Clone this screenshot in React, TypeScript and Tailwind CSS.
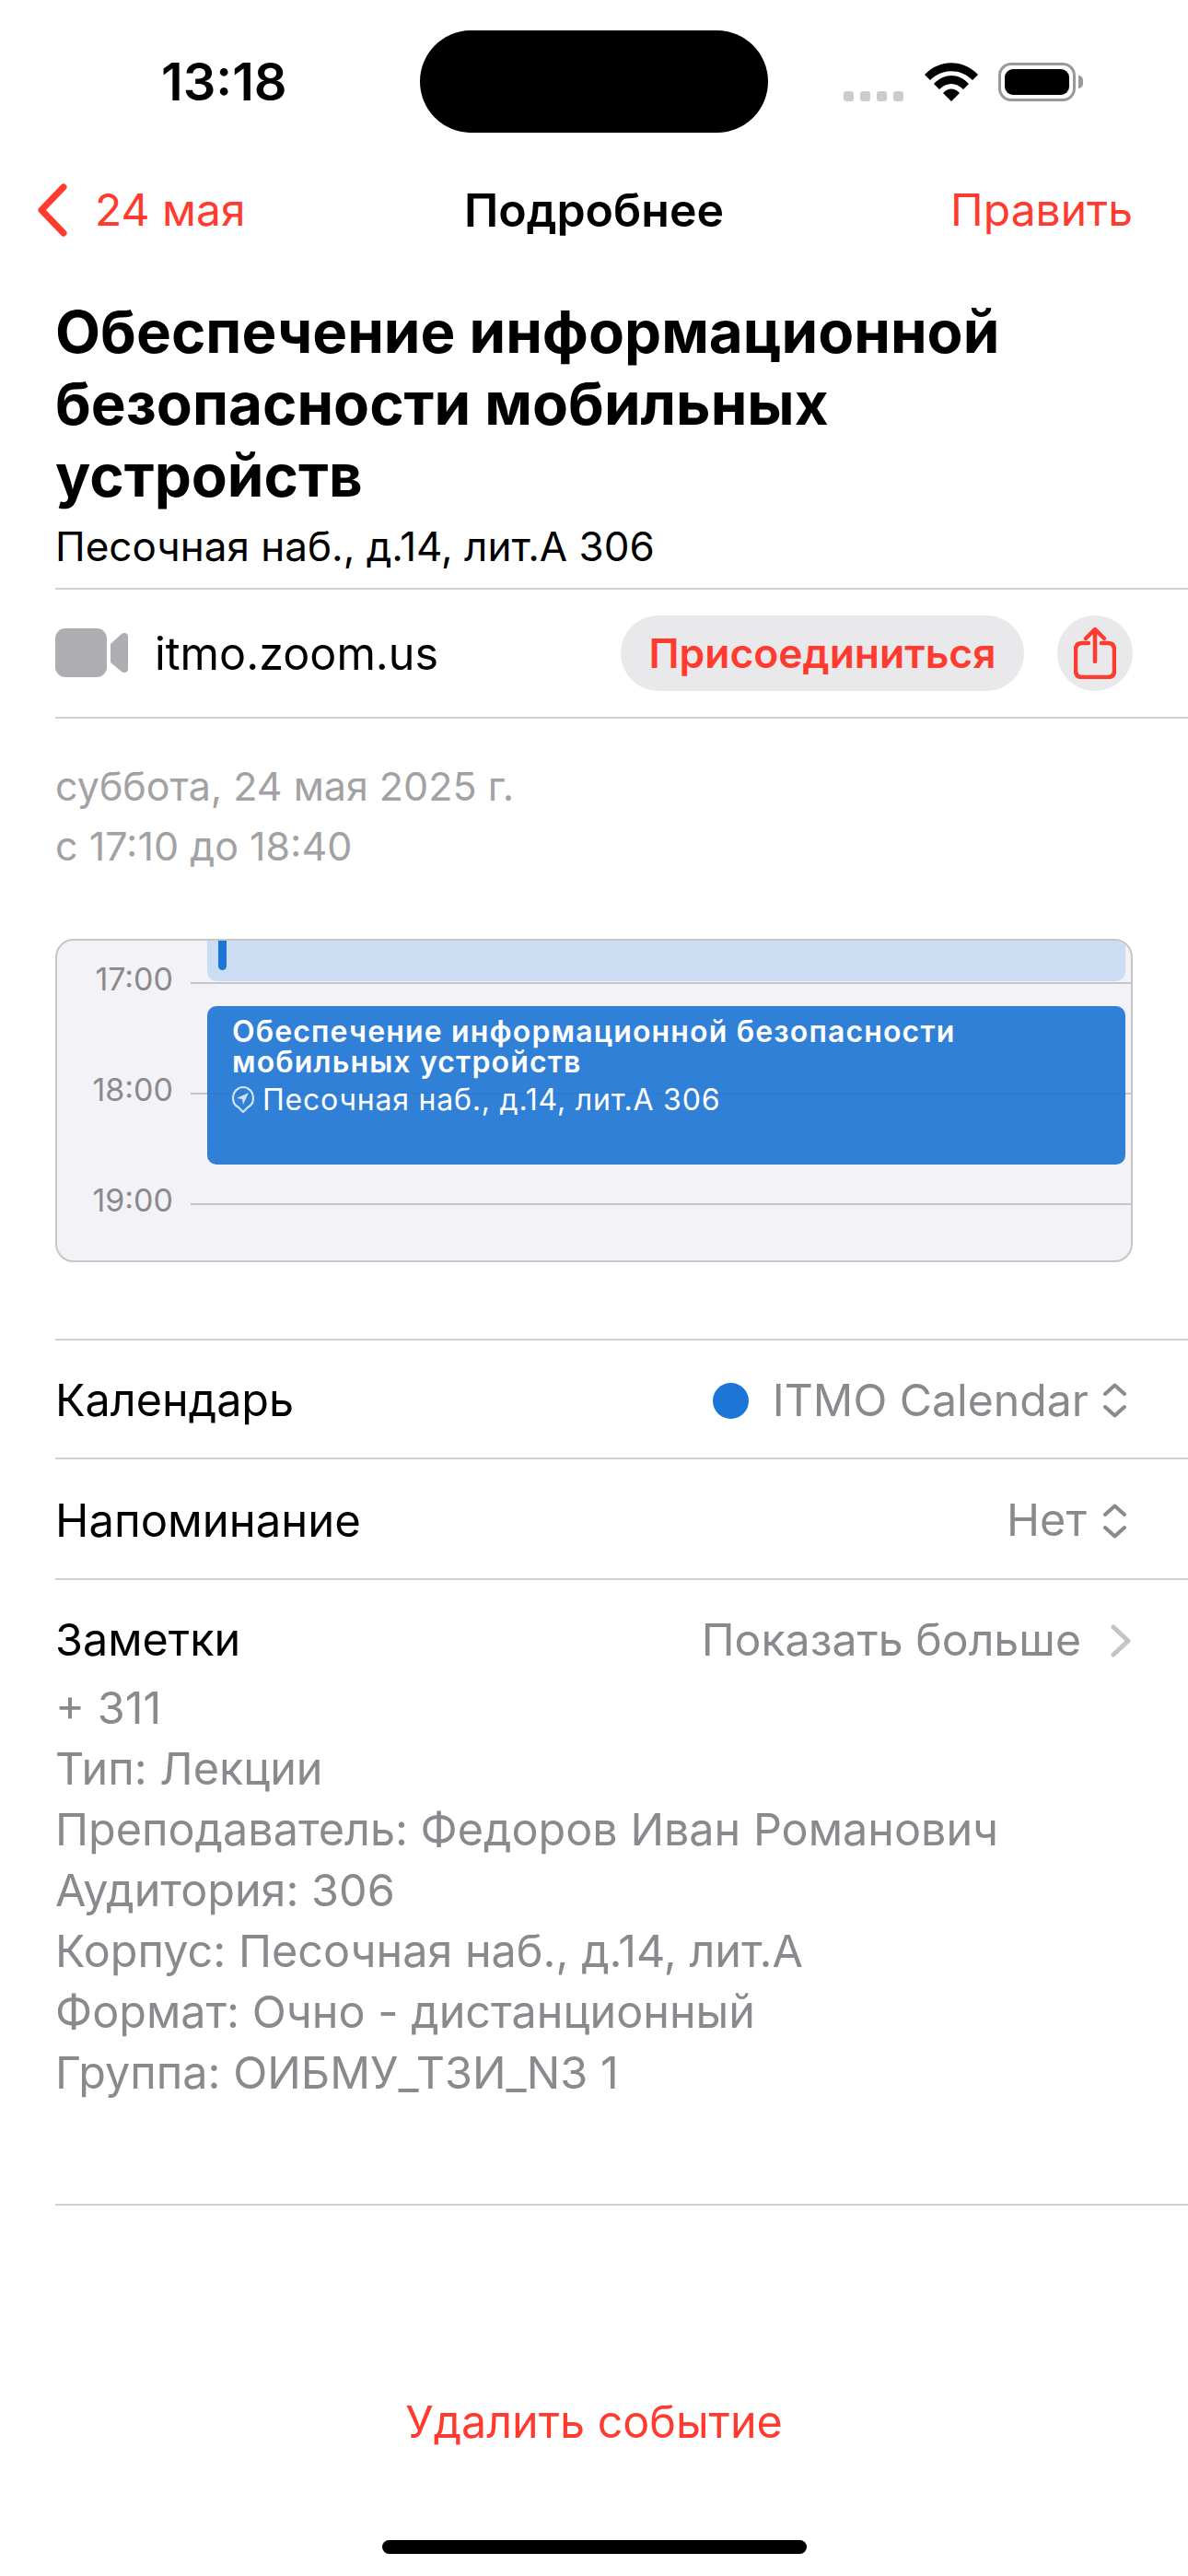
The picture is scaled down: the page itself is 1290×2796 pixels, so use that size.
import React from "react";

const SelectChevrons = () => (
  <svg width="27" height="38" viewBox="0 0 27 38" fill="none" stroke="#8a8a8e" strokeWidth="4" strokeLinecap="round" strokeLinejoin="round">
    <path d="M3 12 L13.5 2.5 L24 12" />
    <path d="M3 26 L13.5 35.5 L24 26" />
  </svg>
);

const notes = [
  "+ 311",
  "Тип: Лекции",
  "Преподаватель: Федоров Иван Романович",
  "Аудитория: 306",
  "Корпус: Песочная наб., д.14, лит.А",
  "Формат: Очно - дистанционный",
  "Группа: ОИБМУ_ТЗИ_N3 1",
];

const hours = ["17:00", "18:00", "19:00"];

export default function App() {
  return (
    <div className="w-[1290px] h-[2796px] bg-white overflow-hidden flex flex-col [font-family:Inter,'Noto_Sans',sans-serif] text-black">
      {/* Status bar */}
      <div className="flex items-center h-[111px] mt-[33px] shrink-0">
        <div className="w-[456px] pl-[175px] text-[56px] font-semibold leading-none">13:18</div>
        <div className="w-[378px] h-[111px] bg-black rounded-full" />
        <div className="flex items-end h-[42px] ml-[82px]">
          <div className="flex gap-[7px]">
            <span className="w-[11px] h-[11px] rounded-[3px] bg-[#cccccc]" />
            <span className="w-[11px] h-[11px] rounded-[3px] bg-[#cccccc]" />
            <span className="w-[11px] h-[11px] rounded-[3px] bg-[#cccccc]" />
            <span className="w-[11px] h-[11px] rounded-[3px] bg-[#cccccc]" />
          </div>
          <svg className="ml-[23px]" width="58" height="42" viewBox="0 0 58 42" fill="#000">
            <path d="M0 13 C16 -4 42 -4 58 13 L52 19 C39 6 19 6 6 19 Z" />
            <path d="M10 23 C21 11 37 11 48 23 L42 29 C34 21 24 21 16 29 Z" />
            <path d="M20 33 C25 27 33 27 38 33 L29 42 Z" />
          </svg>
          <div className="ml-[22px] flex items-center">
            <div className="w-[84px] h-[42px] rounded-[14px] border-[3px] border-[#999999] p-[4px]">
              <div className="w-full h-full bg-black rounded-[9px]" />
            </div>
            <div className="w-[5px] h-[14px] ml-[3px] bg-[#999999] rounded-r-full" />
          </div>
        </div>
      </div>

      {/* Nav */}
      <div className="grid grid-cols-3 items-center h-[96px] mt-[36px] px-[60px] shrink-0 text-[48px] leading-none">
        <div className="flex items-center text-[#ff3b30] -ml-[20px]">
          <svg width="33" height="58" viewBox="0 0 33 58" fill="none" stroke="#ff3b30" strokeWidth="7" strokeLinecap="round" strokeLinejoin="round">
            <path d="M29 4 L5 29 L29 54" />
          </svg>
          <span className="ml-[30px]">24 мая</span>
        </div>
        <div className="text-center text-[50px] font-semibold">Подробнее</div>
        <div className="text-right text-[#ff3b30]">Править</div>
      </div>

      {/* Title */}
      <div className="pl-[60px] pr-[60px] pt-[45px] shrink-0">
        <h1 className="text-[63.7px] leading-[78px] font-bold">
          Обеспечение информационной безопасности мобильных устройств
        </h1>
        <p className="text-[44px] leading-[66px] mt-[5px]">Песочная наб., д.14, лит.А 306</p>
      </div>

      {/* Video call row */}
      <div className="ml-[60px] mt-[12px] h-[142px] border-y-2 border-[#d1d1d4] flex items-center pr-[60px] shrink-0">
        <svg width="79" height="54" viewBox="0 0 79 54" fill="#aeaeb2">
          <rect x="0" y="0" width="56" height="53" rx="11" />
          <path d="M60 17 L72 6 C75 4 79 5 79 9 L79 44 C79 48 75 49 72 47 L60 37 Z" />
        </svg>
        <span className="ml-[29px] pt-[3px] text-[48.5px]">itmo.zoom.us</span>
        <div className="ml-auto w-[438px] h-[82px] rounded-full bg-[#e9e9eb] flex items-center justify-center text-[#ff3b30] text-[44.4px] font-semibold">
          Присоединиться
        </div>
        <div className="ml-[36px] w-[82px] h-[82px] rounded-full bg-[#e9e9eb] flex items-center justify-center">
          <svg width="46" height="56" viewBox="0 0 46 56" fill="none" stroke="#ff3b30" strokeWidth="4.5" strokeLinecap="round" strokeLinejoin="round">
            <path d="M16 17 H9 Q2 17 2 24 V47 Q2 54 9 54 H37 Q44 54 44 47 V24 Q44 17 37 17 H30" />
            <path d="M23 37 V3" />
            <path d="M13 12 L23 2 L33 12" />
          </svg>
        </div>
      </div>

      {/* Date */}
      <div className="pl-[60px] pt-[41px] text-[43px] leading-[65px] text-[#a2a2a6] shrink-0">
        <div>суббота, 24 мая 2025 г.</div>
        <div>с 17:10 до 18:40</div>
      </div>

      {/* Day preview */}
      <div className="relative mx-[60px] mt-[68px] h-[351px] rounded-[20px] border-2 border-[#c6c6c8] bg-[#f2f2f7] overflow-hidden shrink-0">
        <div>
          {hours.map((hour) => (
            <div key={hour} className="flex items-end h-[120px] first:h-[47px]">
              <div className="w-[126px] text-right text-[34px] leading-none text-[#8a8a8e] translate-y-[12px]">{hour}</div>
              <div className="ml-[19px] flex-1 h-[2px] bg-[#c6c6c8]" />
            </div>
          ))}
        </div>
        <div className="absolute left-[163px] right-[6px] -top-[2px] h-[46px] bg-[#cbddf3] rounded-b-[10px]">
          <div className="absolute left-[12px] top-0 w-[9px] h-[34px] bg-[#1c76d8] rounded-b-full" />
        </div>
        <div className="absolute left-[163px] right-[6px] top-[71px] h-[172px] bg-[#1c73d3]/90 rounded-[10px] pl-[27px] pt-[11px] text-white">
          <div className="text-[32px] leading-[33px] font-semibold tracking-[1.15px]">
            Обеспечение информационной безопасности
            <br />
            мобильных устройств
          </div>
          <div className="flex items-center mt-[5px] text-[32px] leading-[40px] tracking-[0.8px]">
            <svg width="24" height="30" viewBox="0 0 24 30" fill="none" stroke="#cfe2f7" strokeWidth="2.2" strokeLinejoin="round">
              <path d="M12 28 L7 23 C3 21 1 17 1 13 C1 6 6 1 12 1 C18 1 23 6 23 13 C23 17 21 21 17 23 Z" />
              <path d="M18 7 L5 13 L11 14 L12 20 Z" fill="#cfe2f7" stroke="none" />
            </svg>
            <span className="ml-[9px]">Песочная наб., д.14, лит.А 306</span>
          </div>
        </div>
      </div>

      {/* Rows */}
      <div className="ml-[60px] mt-[83px] h-[131px] border-y-2 border-[#d1d1d4] flex items-center pt-[3px] pr-[66px] text-[48.2px] shrink-0">
        <span className="text-[48.5px]">Календарь</span>
        <span className="ml-auto w-[39px] h-[39px] rounded-full bg-[#1c76d8]" />
        <span className="ml-[26px] text-[#8a8a8e]">ITMO Calendar</span>
        <span className="ml-[15px] flex"><SelectChevrons /></span>
      </div>
      <div className="ml-[60px] h-[131px] border-b-2 border-[#d1d1d4] flex items-center pt-[4px] pr-[66px] text-[48.5px] shrink-0">
        <span className="text-[49px]">Напоминание</span>
        <span className="ml-auto text-[#8a8a8e]">Нет</span>
        <span className="ml-[17px] flex"><SelectChevrons /></span>
      </div>
      <div className="ml-[60px] h-[679px] border-b-2 border-[#d1d1d4] pr-[62px] text-[48.5px] shrink-0">
        <div className="flex items-center h-[129px] pt-[2px]">
          <span>Заметки</span>
          <span className="ml-auto text-[48.2px] text-[#8a8a8e]">Показать больше</span>
          <svg className="ml-[32px]" width="22" height="36" viewBox="0 0 22 36" fill="none" stroke="#c4c4c6" strokeWidth="5" strokeLinecap="round" strokeLinejoin="round">
            <path d="M3 3 L19 18 L3 33" />
          </svg>
        </div>
        <div className="-mt-[23px] leading-[66px] text-[#8a8a8e]">
          {notes.map((line) => (
            <div key={line}>{line}</div>
          ))}
        </div>
      </div>

      {/* Delete */}
      <div className="mt-[200px] text-center text-[48.4px] leading-[70px] text-[#ff3b30] shrink-0">Удалить событие</div>

      {/* Home indicator */}
      <div className="mt-[93px] mx-auto w-[461px] h-[15px] rounded-full bg-black shrink-0" />
    </div>
  );
}
